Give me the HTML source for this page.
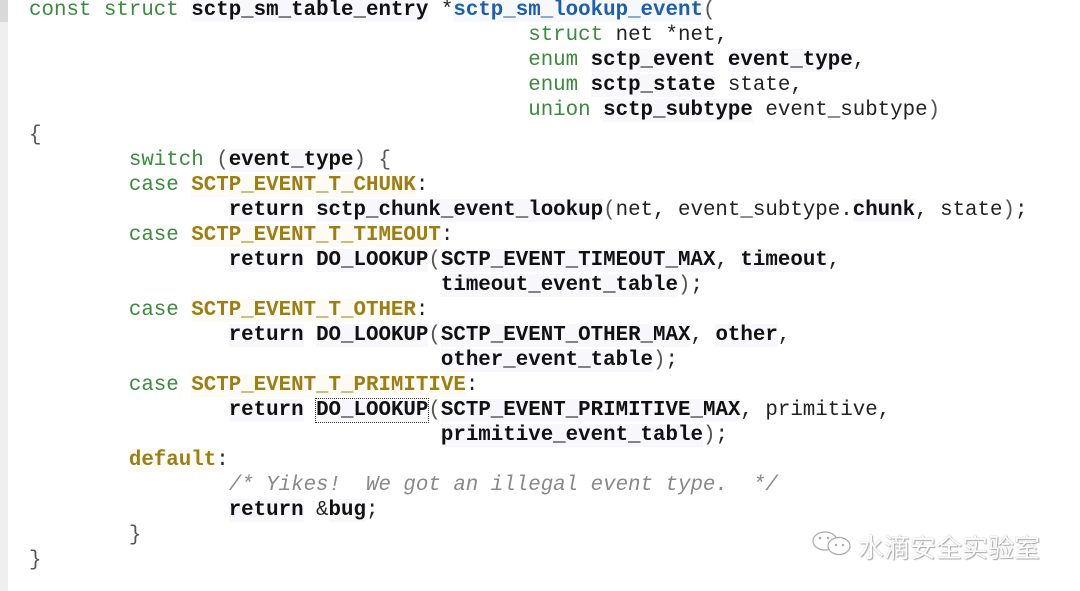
<!DOCTYPE html>
<html><head><meta charset="utf-8"><style>
html,body{margin:0;padding:0;background:#fff;width:1080px;height:591px;overflow:hidden;}
.bar{position:absolute;left:0;top:0;width:8px;height:591px;background:#efefef;}
.bar2{position:absolute;left:0;top:0;width:8px;height:22px;background:#d9d9d9;}
pre{position:absolute;left:29px;top:-2px;margin:0;font-family:"Liberation Mono",monospace;font-size:20.8px;line-height:25px;color:#222;}
.k{color:#3b8a3e}
.c{color:#9c7e17;font-weight:bold;background:#fdfbf3}
.b{font-weight:bold;color:#111;background:#f8f8fc}
.f{color:#1d5fa8;font-weight:bold;background:#f6f8fc}
.m{color:#888;font-style:italic}
.p{color:#555}
.box{outline:1px dotted #333}
.wm{position:absolute;left:858px;top:528px;font-family:"Liberation Sans","Noto Sans CJK SC",sans-serif;font-size:26px;color:#fff;text-shadow:0 0 1px #999,1px 1px 1px #aaa;}
</style></head><body>
<div class="bar"></div><div class="bar2"></div>
<pre><span class="k">const</span> <span class="k">struct</span> <span class="b">sctp_sm_table_entry</span> *<span class="f">sctp_sm_lookup_event</span><span class="p">(</span>
                                        <span class="k">struct</span> net *net,
                                        <span class="k">enum</span> <span class="b">sctp_event</span> <span class="b">event_type</span>,
                                        <span class="k">enum</span> <span class="b">sctp_state</span> state,
                                        <span class="k">union</span> <span class="b">sctp_subtype</span> event_subtype<span class="p">)</span>
<span class="p">{</span>
        <span class="k">switch</span> <span class="p">(</span><span class="b">event_type</span><span class="p">)</span> <span class="p">{</span>
        <span class="k">case</span> <span class="c">SCTP_EVENT_T_CHUNK</span>:
                <span class="b">return</span> <span class="b">sctp_chunk_event_lookup</span><span class="p">(</span>net, event_subtype.<span class="b">chunk</span>, state<span class="p">)</span>;
        <span class="k">case</span> <span class="c">SCTP_EVENT_T_TIMEOUT</span>:
                <span class="b">return</span> <span class="b">DO_LOOKUP</span><span class="p">(</span><span class="b">SCTP_EVENT_TIMEOUT_MAX</span>, <span class="b">timeout</span>,
                                 <span class="b">timeout_event_table</span><span class="p">)</span>;
        <span class="k">case</span> <span class="c">SCTP_EVENT_T_OTHER</span>:
                <span class="b">return</span> <span class="b">DO_LOOKUP</span><span class="p">(</span><span class="b">SCTP_EVENT_OTHER_MAX</span>, <span class="b">other</span>,
                                 <span class="b">other_event_table</span><span class="p">)</span>;
        <span class="k">case</span> <span class="c">SCTP_EVENT_T_PRIMITIVE</span>:
                <span class="b">return</span> <span class="b box">DO_LOOKUP</span><span class="p">(</span><span class="b">SCTP_EVENT_PRIMITIVE_MAX</span>, primitive,
                                 <span class="b">primitive_event_table</span><span class="p">)</span>;
        <span class="c">default</span>:
                <span class="m">/* Yikes!  We got an illegal event type.  */</span>
                <span class="b">return</span> &amp;<span class="b">bug</span>;
        <span class="p">}</span>
<span class="p">}</span></pre>
<svg style="position:absolute;left:811px;top:530px" width="46" height="28" viewBox="0 0 46 28"><g fill="#fff" stroke="#aaa" stroke-width="1.2"><ellipse cx="14" cy="11" rx="12" ry="9"/><ellipse cx="28" cy="16" rx="11" ry="8.5"/></g><g fill="#aaa"><circle cx="9" cy="8" r="1.3"/><circle cx="17" cy="8" r="1.3"/><circle cx="25" cy="15" r="1.2"/><circle cx="32" cy="15" r="1.2"/></g></svg>
<div class="wm">水滴安全实验室</div>
</body></html>
